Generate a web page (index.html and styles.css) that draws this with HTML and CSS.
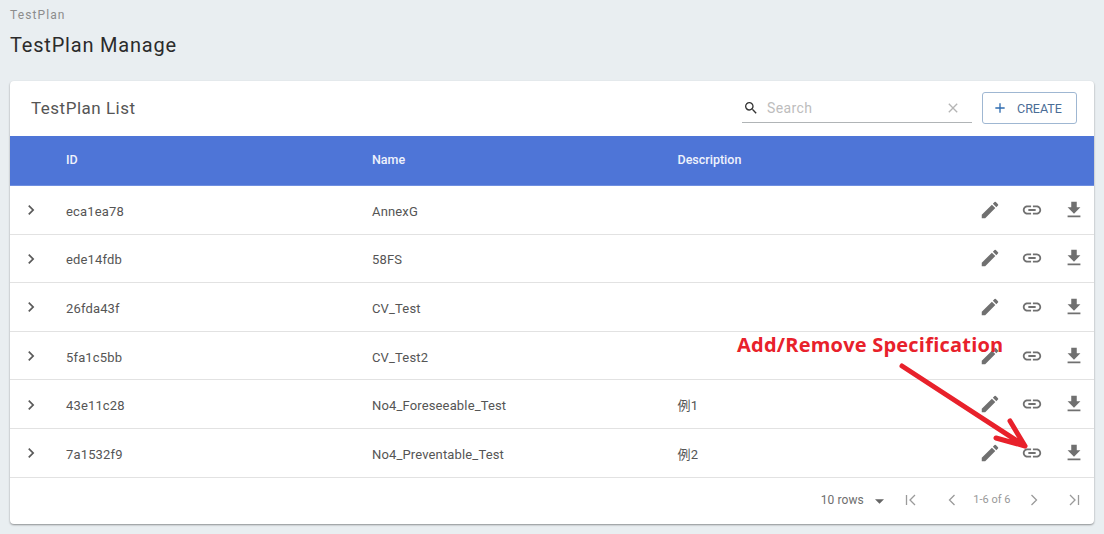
FILE: index.html
```html
<!DOCTYPE html>
<html lang="en">
<head>
<meta charset="utf-8">
<title>TestPlan Manage</title>
<link rel="stylesheet" href="styles.css">
</head>
<body>
<svg class="defs" width="0" height="0">
  <defs>
    <symbol id="i-edit" viewBox="0 0 24 24"><path d="M3 17.25V21h3.75L17.81 9.94l-3.75-3.75L3 17.25zM20.71 7.04a1 1 0 0 0 0-1.41l-2.34-2.34a1 1 0 0 0-1.41 0l-1.83 1.83 3.75 3.75 1.83-1.83z"/></symbol>
    <symbol id="i-link" viewBox="0 0 24 24"><path d="M3.9 12c0-1.71 1.39-3.1 3.1-3.1h4V7H7c-2.76 0-5 2.24-5 5s2.24 5 5 5h4v-1.9H7c-1.71 0-3.1-1.39-3.1-3.1zM8 13h8v-2H8v2zm9-6h-4v1.9h4c1.71 0 3.1 1.39 3.1 3.1s-1.39 3.1-3.1 3.1h-4V17h4c2.76 0 5-2.24 5-5s-2.24-5-5-5z"/></symbol>
    <symbol id="i-down" viewBox="0 0 24 24"><path d="M19 9h-4V3H9v6H5l7 7 7-7zM5 18v2h14v-2H5z"/></symbol>
    <symbol id="i-chev" viewBox="0 0 24 24"><path d="M8.59 16.59L13.17 12 8.59 7.41 10 6l6 6-6 6z"/></symbol>
  </defs>
</svg>
<main class="page">
  <div class="crumb">TestPlan</div>
  <h1 class="title">TestPlan Manage</h1>
  <section class="card">
    <div class="toolbar">
      <h2 class="list-title">TestPlan List</h2>
      <div class="search">
        <svg class="search-icon" viewBox="0 0 24 24"><path d="M15.5 14h-.79l-.28-.27A6.47 6.47 0 0 0 16 9.5 6.5 6.5 0 1 0 9.5 16c1.61 0 3.09-.59 4.23-1.57l.27.28v.79l5 4.99L20.49 19l-4.99-5zm-6 0C7.01 14 5 11.99 5 9.5S7.01 5 9.5 5 14 7.01 14 9.5 11.99 14 9.5 14z"/></svg>
        <span class="search-ph">Search</span>
        <svg class="search-x" viewBox="0 0 24 24"><path d="M19 6.41L17.59 5 12 10.59 6.41 5 5 6.41 10.59 12 5 17.59 6.41 19 12 13.41 17.59 19 19 17.59 13.41 12z"/></svg>
      </div>
      <div class="create">
        <svg class="create-plus" viewBox="0 0 24 24"><path d="M19 13h-6v6h-2v-6H5v-2h6V5h2v6h6v2z"/></svg>
        <span>CREATE</span>
      </div>
    </div>

    <div class="row head">
      <span></span><span>ID</span><span>Name</span><span>Description</span>
    </div>

    <div class="row body"><svg class="chev"><use href="#i-chev"/></svg><span>eca1ea78</span><span>AnnexG</span><span></span>
      <div class="acts"><svg><use href="#i-edit"/></svg><svg><use href="#i-link"/></svg><svg><use href="#i-down"/></svg></div></div>
    <div class="row body"><svg class="chev"><use href="#i-chev"/></svg><span>ede14fdb</span><span>58FS</span><span></span>
      <div class="acts"><svg><use href="#i-edit"/></svg><svg><use href="#i-link"/></svg><svg><use href="#i-down"/></svg></div></div>
    <div class="row body"><svg class="chev"><use href="#i-chev"/></svg><span>26fda43f</span><span>CV_Test</span><span></span>
      <div class="acts"><svg><use href="#i-edit"/></svg><svg><use href="#i-link"/></svg><svg><use href="#i-down"/></svg></div></div>
    <div class="row body"><svg class="chev"><use href="#i-chev"/></svg><span>5fa1c5bb</span><span>CV_Test2</span><span></span>
      <div class="acts"><svg><use href="#i-edit"/></svg><svg><use href="#i-link"/></svg><svg><use href="#i-down"/></svg></div></div>
    <div class="row body"><svg class="chev"><use href="#i-chev"/></svg><span>43e11c28</span><span>No4_Foreseeable_Test</span><span class="cjk">例1</span>
      <div class="acts"><svg><use href="#i-edit"/></svg><svg><use href="#i-link"/></svg><svg><use href="#i-down"/></svg></div></div>
    <div class="row body"><svg class="chev"><use href="#i-chev"/></svg><span>7a1532f9</span><span>No4_Preventable_Test</span><span class="cjk">例2</span>
      <div class="acts"><svg><use href="#i-edit"/></svg><svg><use href="#i-link"/></svg><svg><use href="#i-down"/></svg></div></div>

    <div class="pager">
      <span class="rows">10 rows</span>
      <svg class="caret" viewBox="0 0 10 5"><path d="M0 0h10L5 5z"/></svg>
      <svg class="pg pg-first" viewBox="0 0 16 16"><path d="M3.5 3v10M12 3L7 8l5 5" /></svg>
      <svg class="pg pg-prev" viewBox="0 0 16 16"><path d="M10.5 3l-5 5 5 5"/></svg>
      <span class="count">1-6 of 6</span>
      <svg class="pg pg-next" viewBox="0 0 16 16"><path d="M5.5 3l5 5-5 5"/></svg>
      <svg class="pg pg-last" viewBox="0 0 16 16"><path d="M4 3l5 5-5 5M12.5 3v10"/></svg>
    </div>
  </section>
</main>

<div class="note">Add/Remove Specification</div>
<svg class="arrow" viewBox="0 0 1104 534" width="1104" height="534">
  <path d="M902 366L1025 446M1010 421L1025 446L996 438"/>
</svg>
</body>
</html>
```
FILE: styles.css
```css
* { box-sizing: border-box; }
html, body { margin: 0; height: 534px; overflow: hidden; }
body {
  position: relative;
  background: #e9eef1;
  font-family: Roboto, "Noto Sans CJK JP", sans-serif;
  color: #555;
}
.defs { display: block; height: 0; }
.page { padding: 8px 10px 0; }
.crumb {
  font-size: 12px;
  line-height: 14px;
  letter-spacing: 1.1px;
  color: #8c8c8c;
}
.title {
  margin: 9px 0 22px;
  font-size: 20px;
  line-height: 28px;
  font-weight: 400;
  letter-spacing: 0.8px;
  color: #2b2b2b;
}
.card {
  width: 1084px;
  height: 443px;
  background: #fff;
  border-radius: 4px;
  overflow: hidden;
  box-shadow: 0 1px 2px rgba(0,0,0,.4);
  display: flex;
  flex-direction: column;
}
.toolbar {
  height: 55px;
  flex: none;
  display: flex;
  align-items: center;
  padding: 0 17px 1px 21px;
}
.list-title {
  margin: 0;
  flex: 1;
  font-size: 17px;
  font-weight: 400;
  letter-spacing: 0.5px;
  color: #555;
}
.search {
  width: 230px;
  height: 30px;
  border-bottom: 1px solid #b0b4b6;
  display: flex;
  align-items: center;
  padding-left: 1px;
}
.search-icon { width: 16px; height: 16px; fill: #333; flex: none; }
.search-ph {
  margin-left: 8px;
  flex: 1;
  font-size: 14px;
  letter-spacing: 0.4px;
  color: #bdbdbd;
}
.search-x { width: 16px; height: 16px; fill: #b5b5b5; margin-right: 11px; flex: none; }
.create {
  margin-left: 10px;
  width: 95px;
  height: 32px;
  border: 1px solid #9fb7d2;
  border-radius: 3px;
  display: flex;
  align-items: center;
  gap: 9px;
  padding-left: 9px;
  font-size: 12.5px;
  color: #4a6d96;
}
.create-plus { width: 16px; height: 16px; fill: #2f6cb0; }
.row {
  display: grid;
  grid-template-columns: 56px 306px 305.5px 1fr auto;
  align-items: center;
  flex: none;
}
.head {
  height: 50px;
  padding-bottom: 2px;
  background: #4e75d7;
  color: #eef2fc;
  font-size: 12.5px;
  font-weight: 500;
  border-bottom: 1px solid #6f8fe0;
}
.body {
  height: 48.6px;
  padding-top: 3px;
  border-bottom: 1px solid #e2e2e2;
  font-size: 13px;
  letter-spacing: 0.15px;
}
.cjk { margin-top: -2px; }
.chev { width: 20px; height: 20px; margin-left: 11px; margin-top: -2px; fill: #5a5a5a; }
.acts {
  display: flex;
  gap: 20px;
  padding-right: 9px;
  margin-top: -3px;
}
.acts svg { width: 22px; height: 22px; fill: #707070; display: block; }
.pager {
  flex: 1;
  display: flex;
  align-items: center;
  justify-content: flex-end;
  padding: 0 12.5px 2px 0;
  color: #6e6e6e;
}
.rows { font-size: 12px; letter-spacing: 0.1px; }
.caret { width: 9px; height: 5px; fill: #666; margin-left: 11px; margin-top: 3px; }
.pg { width: 16px; height: 16px; fill: none; stroke: #9a9a9a; stroke-width: 1.3; }
.pg-first { margin-left: 19px; }
.pg-prev { margin-left: 25.5px; }
.count { font-size: 11px; margin: 0 15px 0 13px; color: #999; }
.pg-last { margin-left: 24px; }
.note {
  position: absolute;
  left: 737px;
  top: 333px;
  font-family: "Open Sans", sans-serif;
  font-size: 20px;
  line-height: 24px;
  font-weight: 700;
  letter-spacing: 0.22px;
  white-space: nowrap;
  color: #e8212b;
}
.arrow {
  position: absolute;
  left: 0;
  top: 0;
  fill: none;
  stroke: #e8212b;
  stroke-width: 5;
  stroke-linecap: round;
  stroke-linejoin: round;
  pointer-events: none;
}
```
